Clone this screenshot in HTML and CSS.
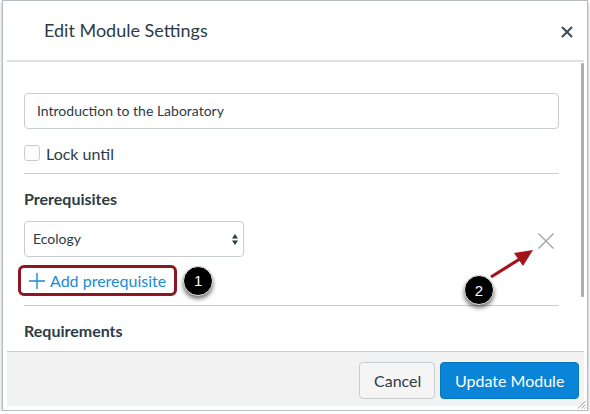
FILE: index.html
```html
<!DOCTYPE html>
<html>
<head>
<meta charset="utf-8">
<link rel="stylesheet" href="styles.css">
</head>
<body>
<div class="dialog">
  <div class="header">
    <h1 class="title">Edit Module Settings</h1>
    <span class="close"><svg width="12" height="12" viewBox="0 0 12 12"><path d="M1.5 1.5 L10.5 10.5 M10.5 1.5 L1.5 10.5" stroke="#3b4a55" stroke-width="2" stroke-linecap="round"/></svg></span>
  </div>
  <div class="body">
    <div class="content">
      <div class="text-input">Introduction to the Laboratory</div>
      <div class="check-row"><span class="checkbox"></span><span class="check-label">Lock until</span></div>
      <div class="rule"></div>
      <h2 class="section">Prerequisites</h2>
      <div class="prereq-row">
        <div class="select">Ecology
          <svg class="select-arrows" width="6" height="11" viewBox="0 0 6 11"><path d="M3 0 L6 4.5 L0 4.5 Z M0 6.5 L6 6.5 L3 11 Z" fill="#2d3b45"/></svg>
        </div>
        <svg class="remove" width="16" height="16" viewBox="0 0 16 16"><path d="M0.5 0.5 L15.5 15.5 M15.5 0.5 L0.5 15.5" stroke="#a3a3a3" stroke-width="1.4"/></svg>
      </div>
      <div class="add-row">
        <span class="add-link"><svg class="plus" width="16" height="16" viewBox="0 0 16 16"><path d="M8 0 V16 M0 8 H16" stroke="#1a8bd8" stroke-width="1.4"/></svg>Add prerequisite</span>
        <span class="badge">1</span>
      </div>
      <div class="rule rule-low"></div>
      <h2 class="section">Requirements</h2>
    </div>
    <div class="scrollbar"><div class="thumb"></div></div>
    <svg class="arrow" width="60" height="40" viewBox="0 0 60 40"><path d="M4 32 L36 12" stroke="#a3141b" stroke-width="3.2"/><path d="M46 5 L27 8 L36 21 Z" fill="#a3141b"/></svg>
    <span class="badge badge-two">2</span>
  </div>
  <div class="footer">
    <button class="btn btn-cancel">Cancel</button>
    <button class="btn btn-primary">Update Module</button>
  </div>
  <svg class="grip" width="9" height="9" viewBox="0 0 9 9"><path d="M8.5 1 L1 8.5 M8.5 4.5 L4.5 8.5 M8.5 7.5 L7.5 8.5" stroke="#9a9a9a" stroke-width="1"/></svg>
</div>
</body>
</html>
```
FILE: styles.css
```css
* { box-sizing: border-box; }
html, body { margin: 0; padding: 0; background: #ffffff; }
body { font-family: Lato, "Open Sans", "Liberation Sans", sans-serif; color: #2d3b45; }

.dialog {
  position: relative;
  margin-left: 2px;
  width: 586px;
  height: 411px;
  border: 1px solid #b7bcc0;
  padding: 0 3px 4px 4px;
  background: #fff;
  box-shadow: 0 2px 3px rgba(0,0,0,0.35);
  display: flex;
  flex-direction: column;
}

.header {
  height: 61px;
  border-bottom: 2px solid #dcdfe1;
  display: flex;
  align-items: center;
  justify-content: space-between;
  padding: 0 11px 0 37px;
  flex: none;
}
.title {
  margin: 0;
  font-size: 18px;
  font-weight: 400;
  color: #2d3b45;
  line-height: 24px;
  margin-top: -1px;
}
.close { display: flex; margin-top: 2px; }

.body {
  position: relative;
  height: 289px;
  flex: none;
  display: flex;
  overflow: hidden;
}
.content {
  flex: 1;
  padding: 31px 22px 0 17px;
}
.scrollbar { width: 3px; flex: none; padding-top: 1px; }
.thumb { height: 234px; background: #a8b0b5; border-radius: 1px; }

.text-input {
  height: 36px;
  border: 1px solid #c7cdd1;
  border-radius: 4px;
  font-size: 14px;
  line-height: 34px;
  padding-left: 12px;
}

.check-row {
  margin-top: 16px;
  height: 16px;
  display: flex;
  align-items: center;
  gap: 6px;
}
.checkbox {
  width: 16px;
  height: 16px;
  border: 1px solid #c7cdd1;
  border-radius: 3px;
  flex: none;
}
.check-label { font-size: 16px; line-height: 16px; margin-top: 1px; }

.rule { margin-top: 12px; height: 1px; background: #c7cdd1; }
.rule-low { margin-top: 9px; }

.section {
  margin: 15px 0 0;
  font-size: 16px;
  font-weight: 700;
  line-height: 20px;
}

.prereq-row {
  margin-top: 12px;
  display: flex;
  align-items: center;
  justify-content: space-between;
}
.select {
  width: 220px;
  height: 36px;
  border: 1px solid #c7cdd1;
  border-radius: 4px;
  font-size: 14px;
  line-height: 34px;
  padding: 0 5px 0 8px;
  display: flex;
  justify-content: space-between;
  align-items: center;
}
.select-arrows { margin-top: 1px; }
.remove { margin-right: 5px; margin-top: 3px; }

.add-row {
  margin-top: 8px;
  display: flex;
  align-items: center;
  gap: 6px;
  margin-left: -6px;
}
.add-link {
  display: flex;
  align-items: center;
  gap: 5px;
  height: 31px;
  border: 3px solid #8e1620;
  border-radius: 6px;
  padding: 0 8px;
  font-size: 16px;
  color: #1a8bd8;
}
.plus { flex: none; }

.badge {
  width: 30px;
  height: 30px;
  border-radius: 50%;
  background: #000;
  color: #fff;
  font-family: "Liberation Sans", Arial, sans-serif;
  font-size: 15px;
  display: flex;
  align-items: center;
  justify-content: center;
  box-shadow: 0 3px 4px rgba(0,0,0,0.55);
  border: 1px solid #e8e8e8;
  flex: none;
}
.badge-two {
  position: absolute;
  left: 457px;
  top: 213px;
}
.arrow {
  position: absolute;
  left: 480px;
  top: 183px;
}

.footer {
  flex: 1;
  border-top: 1px solid #c7cdd1;
  background: #f2f2f2;
  display: flex;
  justify-content: flex-end;
  align-items: flex-start;
  gap: 5px;
  padding: 10px 5px 0 0;
}
.btn {
  height: 37px;
  border-radius: 4px;
  font-family: Lato, "Open Sans", "Liberation Sans", sans-serif;
  font-size: 16px;
  padding: 0 14px;
  margin: 0;
  white-space: nowrap;
}
.btn-cancel {
  background: #f5f5f5;
  border: 1px solid #c7cdd1;
  color: #2d3b45;
  width: 76px;
}
.btn-primary {
  background: #0a84d6;
  border: 1px solid #0774be;
  color: #fff;
  width: 139px;
}

.grip {
  position: absolute;
  right: 1px;
  bottom: 1px;
}
```
